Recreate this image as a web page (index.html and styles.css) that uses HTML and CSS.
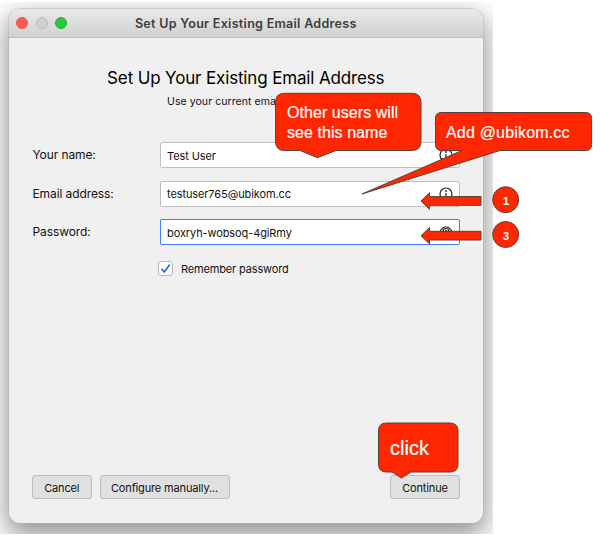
FILE: index.html
```html
<!DOCTYPE html>
<html lang="en">
<head>
<meta charset="utf-8">
<title>Set Up Your Existing Email Address</title>
<link rel="stylesheet" href="styles.css">
</head>
<body>
<div class="backdrop">
  <main class="window">
    <header class="titlebar">
      <div class="lights"><i class="light close"></i><i class="light minimize"></i><i class="light zoom"></i></div>
      <span class="title">Set Up Your Existing Email Address</span>
    </header>
    <section class="content">
      <h1><span class="heading">Set Up Your Existing Email Address</span></h1>
      <p class="sub">Use your current email address</p>
      <div class="form">
        <label>Your name:</label>
        <div class="field"><span class="name">Test User</span>
          <svg class="icon" viewBox="0 0 14 14"><circle cx="7" cy="7" r="6"/><path d="M7 6v4"/><circle class="dot" cx="7" cy="4" r=".9"/></svg></div>
        <label>Email address:</label>
        <div class="field"><span class="email">testuser765@ubikom.cc</span>
          <svg class="icon" viewBox="0 0 14 14"><circle cx="7" cy="7" r="6"/><path d="M7 6v4"/><circle class="dot" cx="7" cy="4" r=".9"/></svg></div>
        <label>Password:</label>
        <div class="field focused"><span class="pass">boxryh-wobsoq-4giRmy</span>
          <svg class="icon eye" viewBox="0 0 14 14"><path d="M1 7Q3 2 7 2t6 5Q11 11 7 11T1 7Z"/><circle cx="7" cy="6.500" r="3"/><circle class="dot" cx="7" cy="6.500" r="1.500"/></svg></div>
      </div>
      <div class="remember">
        <span class="check"><svg viewBox="0 0 13 13"><path d="M3 7.2 5.3 10 10.4 3"/></svg></span>
        <span class="remember-text">Remember password</span>
      </div>
      <footer class="actions">
        <button class="cancel"><span>Cancel</span></button>
        <button class="configure"><span>Configure manually...</span></button>
        <button class="continue"><span>Continue</span></button>
      </footer>
    </section>
  </main>
</div>
<svg class="annotations" viewBox="0 0 600 543">
  <path d="M284.5 93.300H412Q421 93.300 421 102.300V141.500Q421 150.500 412 150.500H336L317.500 157.700 300 150.500H284.500Q275.500 150.500 275.500 141.500V102.300Q275.500 93.300 284.500 93.300Z"/>
  <path d="M441.500 112.500H585.500Q591.600 112.500 591.600 118.500V144.500Q591.600 150.500 585.500 150.500H500L362 194 462 150.500H441.500Q435.500 150.500 435.500 144.500V118.500Q435.500 112.500 441.500 112.500Z"/>
  <path d="M386.500 423H450Q458 423 458 431V464Q458 472 450 472H411L401.500 478 392 472H386.500Q378.500 472 378.500 464V431Q378.500 423 386.500 423Z"/>
  <path d="M421 201 429.500 192.800V196.600H481V205.300H429.500V209.200Z"/>
  <path d="M421 235.700 429.500 227.500V231.300H481V240H429.500V243.900Z"/>
  <circle cx="505.700" cy="199.700" r="13"/>
  <circle cx="505.700" cy="234.500" r="13"/>
</svg>
<div class="note note-name">Other users will<br>see this name</div>
<div class="note note-domain">Add @ubikom.cc</div>
<div class="note note-click">click</div>
<div class="step step-one">1</div>
<div class="step step-three">3</div>
</body>
</html>
```
FILE: styles.css
```css
* { box-sizing: border-box; }
body { margin: 0; padding-top: 2px; height: 543px; background: #fff; font-family: Inter, "Liberation Sans", sans-serif; color: #111; overflow: hidden; position: relative; }
.backdrop { width: 493px; height: 532px; padding: 7px 10px 11px 8.5px; overflow: hidden; }
.window { width: 474.5px; height: 513.5px; border-radius: 11px; background: #f0f0f0; overflow: hidden; box-shadow: 0 0 0 .5px #b4b4b4, 0 10px 26px 3px rgba(0,0,0,.42); }
.titlebar { height: 29px; display: flex; align-items: center; justify-content: center; position: relative; background: linear-gradient(#eaeaea, #d0d0d0); border-bottom: 1px solid #bcbcbc; }
.lights { position: absolute; left: 7.500px; display: flex; gap: 7.5px; }
.light { width: 12px; height: 12px; border-radius: 50%; border: 1px solid #0001; }
.close { background: #ff5a52; border-color: #e95750; }
.minimize { background: #d0d0d0; border-color: #bdbdbd; }
.zoom { background: #28c83f; border-color: #20b234; }
.title { font-size: 12.5px; font-weight: 600; color: #3d3d3d; letter-spacing: .3px; white-space: nowrap; }
.content { height: 484.5px; padding: 29px 24px 24px; display: flex; flex-direction: column; }
h1 { margin: 0; text-align: center; font-size: 17px; line-height: 22px; font-weight: 400; letter-spacing: -.15px; white-space: nowrap; color: #000; }
.sub { margin: 6px 0 0; text-align: center; font-size: 10.5px; line-height: 14px; letter-spacing: .07px; }
.form { margin-top: 33px; display: grid; grid-template-columns: 127.5px 300px; row-gap: 12.700px; align-items: center; }
label { font-size: 12px; line-height: 26px; letter-spacing: -.1px; height: 26px; }
.field { height: 26px; border: 1px solid #bfbfbf; border-radius: 2px; background: #fff; display: flex; align-items: center; justify-content: space-between; padding: 0 6px; font-size: 11px; letter-spacing: -.1px; }
.field span { padding-top: 1px; }
.focused { border-color: #3c82f6; }
.icon { width: 14px; height: 14px; fill: none; stroke: #222; stroke-width: 1.2; }
.icon .dot { fill: #222; stroke: none; }
.remember { display: flex; align-items: center; height: 16px; margin: 15px 0 0 125.500px; gap: 8px; font-size: 11px; letter-spacing: -.15px; }
.remember-text { padding-top: 2px; }
.check { width: 15px; height: 15px; border: 1px solid #b7b7b7; border-radius: 3px; background: #fff; display: flex; }
.check svg { width: 13px; height: 13px; fill: none; stroke: #165cf0; stroke-width: 1.5; stroke-linecap: round; }
.actions { margin-top: auto; margin-left: -.5px; display: flex; gap: 8px; }
button { height: 24px; padding: 2px 0 0; border: 1px solid #bdbdbd; border-radius: 3px; background: #e0e0e0; font: 11px Inter, sans-serif; letter-spacing: -.15px; color: #111; }
.cancel { width: 59.5px; }
.configure { width: 130px; }
.continue { width: 70px; margin-left: auto; margin-right: -1px; }
.annotations { position: absolute; left: 0; top: 0; width: 600px; height: 543px; fill: #ff2600; stroke: #59413d; stroke-width: 1; }
.note { position: absolute; color: #fff; font-family: "Liberation Sans", Arial, sans-serif; white-space: nowrap; -webkit-text-stroke: .2px #fff; }
.note-name { left: 287px; top: 103px; font-size: 16px; letter-spacing: .06px; line-height: 19.500px; }
.note-domain { left: 446px; top: 122.500px; font-size: 16px; letter-spacing: .18px; line-height: 19px; }
.note-click { left: 390px; top: 437px; font-size: 20px; line-height: 22px; }
.step { position: absolute; left: 493px; width: 26px; text-align: center; color: #fff; font: bold 11px/14px "Liberation Sans", Arial, sans-serif; }
.step-one { top: 193.500px; }
.step-three { top: 228.500px; }
```
